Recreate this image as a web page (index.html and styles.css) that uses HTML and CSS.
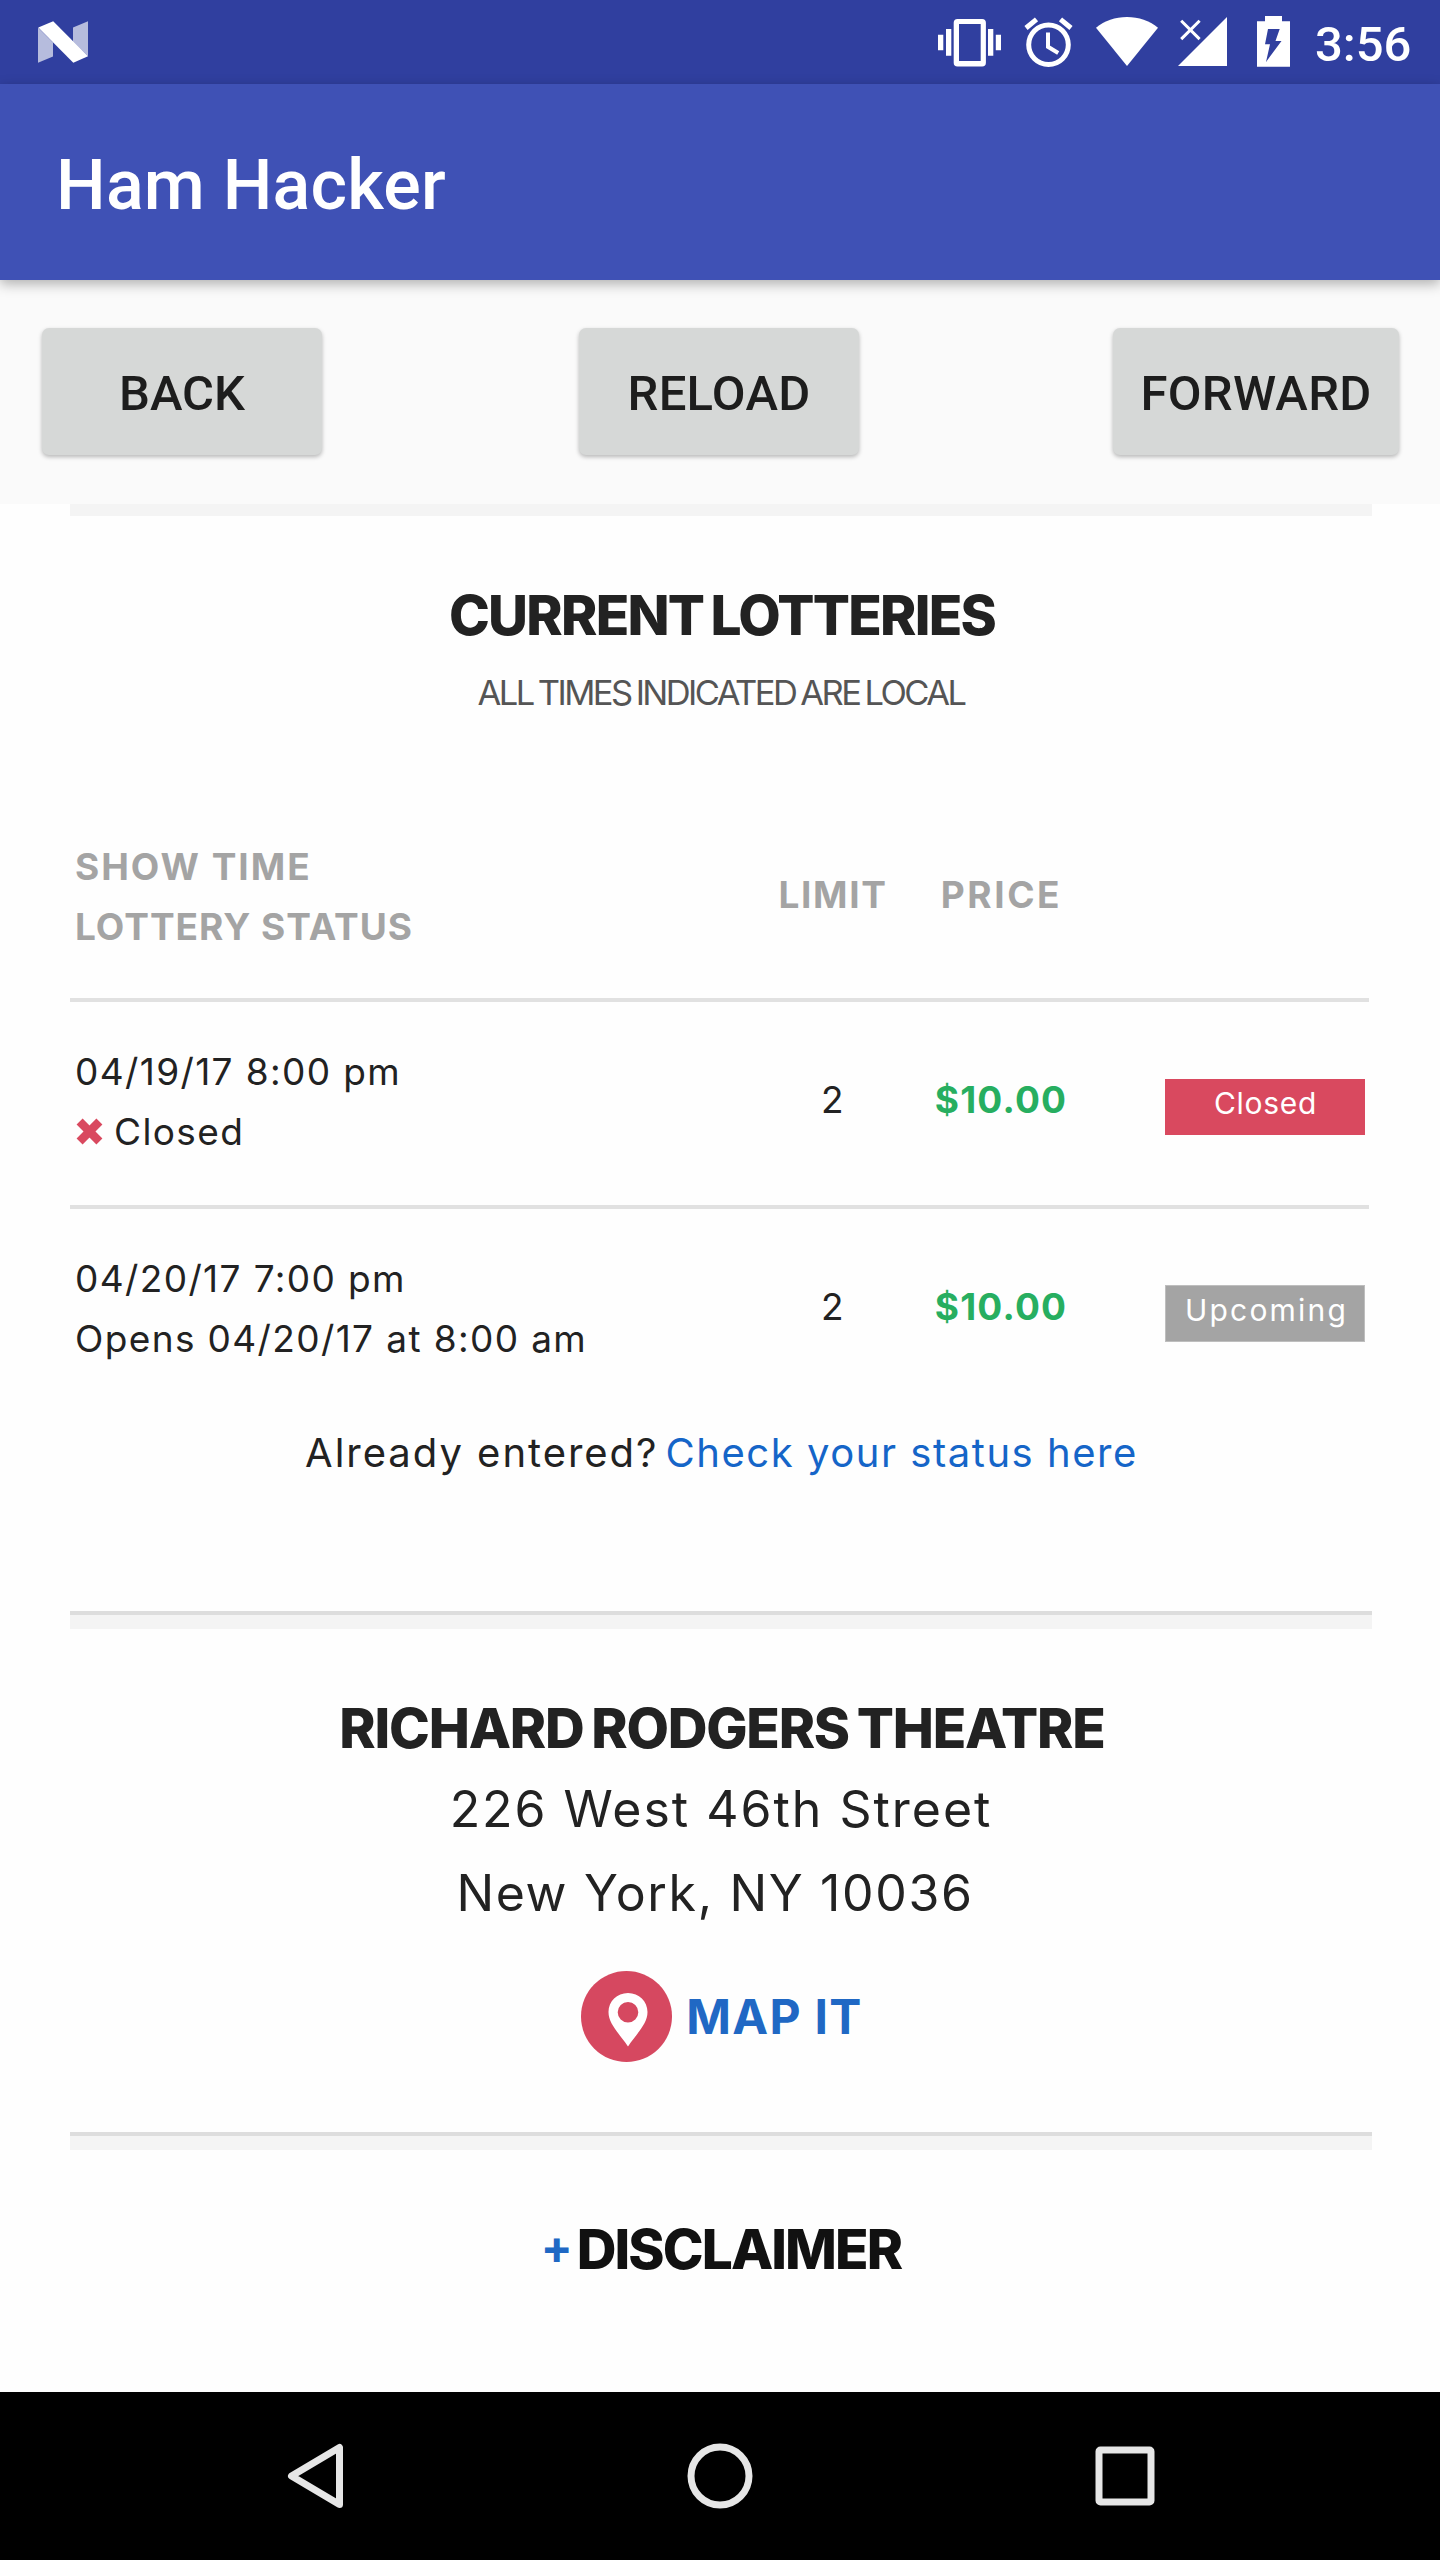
FILE: index.html
```
<!DOCTYPE html>
<html lang="en">
<head>
<meta charset="utf-8">
<title>Ham Hacker</title>
<link rel="stylesheet" href="styles.css">
</head>
<body>
<header class="status-bar">
  <svg class="logo" width="50" height="84" viewBox="0 0 50 84" fill="#fff">
    <path opacity=".65" d="M0 27.5V62.7L15 56.5V42.5zM50 21.3L35 27.5V41.5L50 56.3z"/>
    <path d="M.3 27.6L15.2 21.2L50 56.3L35.3 62.7z"/>
  </svg>
  <div class="indicators">
    <svg width="63" height="84" viewBox="0 0 63 84" fill="#fff">
      <path d="M0 34.7h5.3v15.6H0zM8 29h5.3v26.7H8zM50 29h5.3v26.7H50zM57.8 34.7H63v15.6h-5.2z"/>
      <path fill-rule="evenodd" d="M19.5 19h24.6q3.8 0 3.8 3.8v40q0 3.8-3.8 3.8H19.5q-3.8 0-3.8-3.8v-40q0-3.8 3.8-3.8zM21 24v37h21.7V24z"/>
    </svg>
    <svg class="gap-m" width="49" height="84" viewBox="0 0 49 84" fill="none" stroke="#fff">
      <circle cx="24.5" cy="44.8" r="19.8" stroke-width="5"/>
      <path stroke-width="4" d="M24 32.5V46.8L34.2 53"/>
      <path stroke-width="5" d="M2 28L12.5 19.4M36.5 19.4L47 28"/>
    </svg>
    <svg class="gap-m" width="62" height="84" viewBox="0 0 62 84" fill="#fff">
      <path d="M0 27.8C8.6 20.7 19.2 17 31 17s22.400 3.700 31 10.800L31 66z"/>
    </svg>
    <svg class="gap-s" width="49" height="84" viewBox="0 0 49 84" fill="#fff">
      <path d="M49 17V66H0z"/>
      <path fill="none" stroke="#fff" stroke-width="3" d="M3.200 20.700L21.600 39.100M21.600 20.700L3.200 39.100"/>
    </svg>
    <svg class="gap-l" width="33" height="84" viewBox="0 0 33 84" fill="#fff">
      <path fill-rule="evenodd" d="M8 16h17v5.200h8V66.800H0V21.200h8zM11 29L8 44.300h5L9 62L24.500 41h-6L22.700 29z"/>
    </svg>
    <span class="clock">3:56</span>
  </div>
</header>
<div class="app-bar"><h1 class="app-title">Ham Hacker</h1></div>
<nav class="toolbar">
  <button class="tool tool-back">BACK</button>
  <button class="tool tool-reload">RELOAD</button>
  <button class="tool tool-forward">FORWARD</button>
</nav>
<main class="page">
  <section class="lotteries">
    <h2 class="heading">CURRENT LOTTERIES</h2>
    <p class="subtitle">ALL TIMES INDICATED ARE LOCAL</p>
    <div class="table">
      <div class="row head">
        <div class="show"><div>SHOW TIME</div><div class="ls-status">LOTTERY STATUS</div></div>
        <div class="cell">LIMIT</div>
        <div class="cell price-head">PRICE</div>
      </div>
      <div class="row">
        <div class="show">
          <div>04/19/17 8:00 pm</div>
          <div class="closed-line"><svg class="cross" width="27" height="27" viewBox="0 0 27 27"><path stroke="#d9495f" stroke-width="8.500" d="M3.600 3.600L23.400 23.400M23.400 3.600L3.600 23.400"/></svg><span>Closed</span></div>
        </div>
        <div class="cell">2</div>
        <div class="cell price">$10.00</div>
        <div class="badge badge-closed">Closed</div>
      </div>
      <div class="row last">
        <div class="show"><div>04/20/17 7:00 pm</div><div>Opens 04/20/17 at 8:00 am</div></div>
        <div class="cell">2</div>
        <div class="cell price">$10.00</div>
        <div class="badge badge-upcoming">Upcoming</div>
      </div>
    </div>
    <p class="entered"><span class="question">Already entered?</span><a class="link">Check your status here</a></p>
  </section>
  <section class="venue">
    <h2 class="heading venue-name">RICHARD RODGERS THEATRE</h2>
    <p class="address">226 West 46th Street</p>
    <p class="address city">New York, NY 10036</p>
    <a class="map-link">
      <svg width="91" height="91" viewBox="0 0 91 91">
        <circle cx="45.500" cy="45.500" r="45.500" fill="#d64860"/>
        <path fill="#fff" fill-rule="evenodd" d="M47 22c-11 0-19.500 8.500-19.500 19C27.500 53 38 62 47 75.500C56 62 66.500 53 66.500 41C66.500 30.500 58 22 47 22zm0 9a10.300 10.300 0 1 1 0 20.600a10.300 10.300 0 1 1 0-20.600z"/>
      </svg>
      <span>MAP IT</span>
    </a>
  </section>
  <section class="disclaimer">
    <span class="plus">+</span>
    <h2 class="heading dark">DISCLAIMER</h2>
  </section>
</main>
<footer class="nav-bar">
  <svg width="58" height="68" viewBox="0 0 58 68" fill="none" stroke="#e6e6e6" stroke-width="7" stroke-linejoin="round"><path d="M52.500 5.500V62.500L4.500 34z"/></svg>
  <svg width="66" height="66" viewBox="0 0 66 66" fill="none" stroke="#e6e6e6" stroke-width="7"><circle cx="33" cy="33" r="29"/></svg>
  <svg width="60" height="60" viewBox="0 0 60 60" fill="none" stroke="#e6e6e6" stroke-width="7"><rect x="4" y="4" width="52" height="52" rx="1.500"/></svg>
</footer>
</body>
</html>
```
FILE: styles.css
```
* { box-sizing: border-box; }
body {
  margin: 0;
  width: 1440px;
  height: 2560px;
  display: flex;
  flex-direction: column;
  background: #fefefe;
  color: #222;
  font-family: Inter, "Liberation Sans", sans-serif;
  font-kerning: normal;
}
h1, h2, p { margin: 0; }
svg { display: block; flex: none; }

.status-bar {
  height: 84px;
  padding-left: 38px;
  display: flex;
  background: #303f9f;
}
.indicators { display: flex; margin-left: auto; }
.gap-s { margin-left: 20px; }
.gap-m { margin-left: 23px; }
.gap-l { margin-left: 30px; }
.clock {
  width: 125px;
  margin-left: 25px;
  font: 500 49px/89px Roboto, sans-serif;
  letter-spacing: 0;
  color: #fff;
}
.app-bar {
  height: 196px;
  padding-left: 56px;
  background: #3f51b5;
  box-shadow: 0 4px 12px rgba(0, 0, 0, .3);
  z-index: 1;
}
.app-title {
  font: 500 70px/202px Roboto, sans-serif;
  letter-spacing: .22px;
  color: #fff;
}
.toolbar {
  height: 224px;
  padding: 48px 41px 0 42px;
  display: flex;
  justify-content: space-between;
  background: #fafafa;
}
.tool {
  width: 280px;
  height: 127px;
  padding: 5px 0 0;
  border: 0;
  border-radius: 7px;
  background: #d6d8d7;
  box-shadow: 0 2px 4px rgba(0, 0, 0, .27);
  color: #1d1d1d;
  font: 500 49px/122px Roboto, sans-serif;
}
.tool-forward, .tool-reload { letter-spacing: .3px; }
.tool-reload { margin-left: 3px; }
.tool-forward { width: 286px; }

.page {
  flex: 1;
  padding: 0 68px 0 70px;
}
.lotteries { border-top: 12px solid #f4f4f4; padding-top: 66px; height: 1107px; }
.heading {
  padding-left: 2px;
  font-size: 55px;
  font-weight: 800;
  line-height: 66px;
  letter-spacing: -1.75px;
  word-spacing: -3px;
  text-align: center;
  white-space: nowrap;
}
.subtitle {
  margin-top: 20px;
  font-size: 34.5px;
  line-height: 50px;
  letter-spacing: -2.57px;
  word-spacing: -2px;
  text-align: center;
  color: #555;
}
.table {
  width: 1299px;
  margin-top: 119px;
  font-size: 37px;
  line-height: 59.5px;
  letter-spacing: 1.38px;
}
.row {
  height: 207px;
  padding: 40px 4px 0 5px;
  display: grid;
  grid-template-columns: 678px 160px 175px 1fr;
  align-items: start;
  border-bottom: 4px solid #e1e1e1;
}
.row.head {
  height: 165px;
  padding-top: 0;
  font-weight: 700;
  letter-spacing: 2px;
  color: #a4a4a4;
}
.row.last { border-bottom: 0; height: 204px; }
.show { white-space: nowrap; }
.ls-status { letter-spacing: 1px; }
.cell {
  padding: 28px 0 0;
  text-align: center;
}
.head .cell { letter-spacing: 1.6px; }
.head .price-head { padding-left: 2px; letter-spacing: 2.57px; }
.cell.price { padding-left: 1px; font-weight: 700; letter-spacing: 1.21px; color: #27ae60; }
.closed-line { display: flex; align-items: center; gap: 11px; }
.cross { margin-left: 1px; }
.badge {
  justify-self: end;
  width: 200px;
  height: 56px;
  margin-top: 37px;
  padding-left: 1px;
  font-size: 30px;
  line-height: 48px;
  text-align: center;
  color: #fff;
}
.badge-closed { background: #d9495f; letter-spacing: .7px; }
.badge-upcoming {
  height: 57px;
  margin-top: 36px;
  padding-left: 3px;
  border: 1px solid #bebebe;
  background: #a4a4a4;
  letter-spacing: 2.2px;
}
.entered {
  margin-top: 10px;
  display: flex;
  justify-content: center;
  gap: 7px;
  padding-left: 1px;
  font-size: 40px;
  line-height: 60px;
}
.question { letter-spacing: 1.97px; }
.link { letter-spacing: 1.54px; color: #1565c8; }

.venue, .disclaimer {
  border-top: 4px solid #ddd;
  box-shadow: inset 0 14px #f4f4f4;
  padding-top: 80px;
}
.venue { height: 521px; }
.venue-name { letter-spacing: -1.23px; }
.address {
  font-size: 50px;
  line-height: 84px;
  letter-spacing: 1.98px;
  text-align: center;
}
.venue-name + .address { margin-top: 6px; }
.city { padding-right: 12px; letter-spacing: 1.65px; }
.map-link {
  margin-top: 36px;
  display: flex;
  justify-content: center;
  align-items: center;
  gap: 14px;
  padding-left: 2px;
  font-size: 48px;
  font-weight: 700;
  letter-spacing: 1.3px;
  color: #2068c4;
}
.disclaimer {
  display: flex;
  justify-content: center;
  align-items: center;
  gap: 2px;
}
.plus {
  font-size: 47px;
  font-weight: 700;
  line-height: 62px;
  padding-bottom: 4px;
  color: #2068c4;
}
.dark { letter-spacing: -1.9px; color: #111; }

.nav-bar {
  height: 168px;
  padding: 0 285px 0 287px;
  display: flex;
  justify-content: space-between;
  align-items: center;
  background: #000;
}
```
